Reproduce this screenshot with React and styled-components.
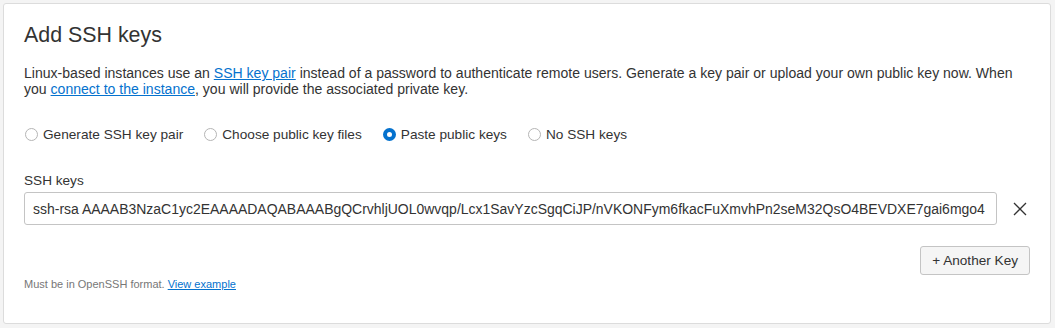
import React, { useState } from "react";
import styled, { createGlobalStyle } from "styled-components";

const GlobalStyle = createGlobalStyle`
  body {
    margin: 0;
    background: #f4f4f4;
    font-family: "Liberation Sans", Arial, sans-serif;
    color: #333;
  }
`;

const Page = styled.div`
  padding: 3px 4px 4px 3px;
`;

const Card = styled.section`
  background: #fff;
  border: 1px solid #dcdcdc;
  border-radius: 3px;
  height: 321px;
  box-sizing: border-box;
  padding: 19px 20px 0 20px;
`;

const Title = styled.h2`
  margin: 0;
  font-size: 21.4px;
  line-height: 24px;
  font-weight: 400;
  color: #333;
`;

const Intro = styled.p`
  margin: 18px 0 0;
  font-size: 14.05px;
  line-height: 16px;
  color: #333;
`;

const Link = styled.a`
  color: #0572ce;
  text-decoration: underline;
  cursor: pointer;
`;

const RadioGroup = styled.div`
  display: flex;
  align-items: center;
  gap: 20px;
  margin-top: 27px;
  height: 20px;
`;

const RadioItem = styled.label`
  display: flex;
  align-items: center;
  gap: 5px;
  font-size: 13.65px;
  color: #333;
  cursor: pointer;
`;

const RadioDot = styled.span`
  width: 13px;
  height: 13px;
  box-sizing: border-box;
  border-radius: 50%;
  margin-left: 1px;
  border: ${(p) => (p.$checked ? "4.5px solid #0572ce" : "1px solid #b5b5b5")};
  background: #fff;
`;

const FieldLabel = styled.div`
  margin-top: 29px;
  font-size: 13.6px;
  line-height: 16px;
  color: #333;
`;

const KeyRow = styled.div`
  display: flex;
  align-items: center;
  gap: 13px;
  margin-top: 3px;
`;

const KeyInput = styled.input`
  flex: 1;
  height: 33px;
  box-sizing: border-box;
  border: 1px solid #c4c4c4;
  border-radius: 3px;
  padding: 0 8px;
  font-family: "Liberation Sans", Arial, sans-serif;
  font-size: 13.97px;
  color: #333;
  outline: none;
`;

const RemoveButton = styled.button`
  width: 20px;
  height: 20px;
  padding: 0;
  border: none;
  background: none;
  display: flex;
  align-items: center;
  justify-content: center;
  cursor: pointer;
`;

const ButtonRow = styled.div`
  display: flex;
  justify-content: flex-end;
  margin-top: 21px;
`;

const SecondaryButton = styled.button`
  height: 29px;
  padding: 0 11px;
  border: 1px solid #c4c4c4;
  border-radius: 3px;
  background: #f5f5f5;
  font-family: "Liberation Sans", Arial, sans-serif;
  font-size: 13.6px;
  color: #333;
`;

const Help = styled.div`
  margin-top: 2px;
  font-size: 11px;
  line-height: 14px;
  color: #777;
`;

const options = [
  "Generate SSH key pair",
  "Choose public key files",
  "Paste public keys",
  "No SSH keys",
];

const App = () => {
  const [choice, setChoice] = useState("Paste public keys");

  return (
    <>
      <GlobalStyle />
      <Page>
        <Card>
          <Title>Add SSH keys</Title>
          <Intro>
            Linux-based instances use an <Link>SSH key pair</Link> instead of a
            password to authenticate remote users. Generate a key pair or upload
            your own public key now. When you <Link>connect to the instance</Link>,
            you will provide the associated private key.
          </Intro>

          <RadioGroup>
            {options.map((opt) => (
              <RadioItem key={opt} onClick={() => setChoice(opt)}>
                <RadioDot $checked={choice === opt} />
                {opt}
              </RadioItem>
            ))}
          </RadioGroup>

          <FieldLabel>SSH keys</FieldLabel>
          <KeyRow>
            <KeyInput
              readOnly
              value="ssh-rsa AAAAB3NzaC1yc2EAAAADAQABAAABgQCrvhljUOL0wvqp/Lcx1SavYzcSgqCiJP/nVKONFym6fkacFuXmvhPn2seM32QsO4BEVDXE7gai6mgo4"
            />
            <RemoveButton aria-label="Remove key">
              <svg width="14" height="14" viewBox="0 0 14 14">
                <path
                  d="M1 1 L13 13 M13 1 L1 13"
                  stroke="#333"
                  strokeWidth="1.3"
                  fill="none"
                />
              </svg>
            </RemoveButton>
          </KeyRow>

          <ButtonRow>
            <SecondaryButton>+ Another Key</SecondaryButton>
          </ButtonRow>

          <Help>
            Must be in OpenSSH format. <Link>View example</Link>
          </Help>
        </Card>
      </Page>
    </>
  );
};

export default App;
